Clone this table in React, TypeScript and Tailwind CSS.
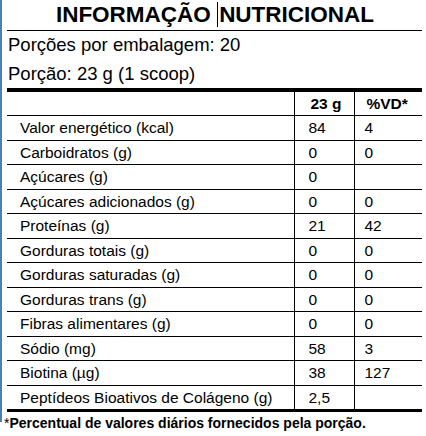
import React from "react";

const ROWS: [string, string, string][] = [
  ["Valor energético (kcal)", "84", "4"],
  ["Carboidratos (g)", "0", "0"],
  ["Açúcares (g)", "0", ""],
  ["Açúcares adicionados (g)", "0", "0"],
  ["Proteínas (g)", "21", "42"],
  ["Gorduras totais (g)", "0", "0"],
  ["Gorduras saturadas (g)", "0", "0"],
  ["Gorduras trans (g)", "0", "0"],
  ["Fibras alimentares (g)", "0", "0"],
  ["Sódio (mg)", "58", "3"],
  ["Biotina (µg)", "38", "127"],
  ["Peptídeos Bioativos de Colágeno (g)", "2,5", ""],
];

export default function App() {
  return (
    <div className="w-[426px] h-[436px] bg-white text-black" style={{ fontFamily: "'Liberation Sans', Arial, sans-serif" }}>
      <div className="h-[422px] border-l-2 border-[#4f7fae] pl-[5px] pr-[4px]">
        <div className="relative h-[31px] border-b border-black flex justify-center">
          <h1 className="text-[22.5px] font-bold leading-none pt-[4px] pl-[1px]">
            INFORMAÇÃO <span className="border-l border-black pl-[1px]">NUTRICIONAL</span>
          </h1>
        </div>
        <p className="text-[18.5px] leading-[29px] pl-[1px] -mt-[1px]">Porções por embalagem: 20</p>
        <p className="text-[18.5px] leading-[29px] pl-[1px]">Porção: 23 g (1 scoop)</p>
        <table className="w-full border-collapse text-[15.5px] border-t-[4px] border-black">
          <thead>
            <tr className="h-[23px] border-b border-black">
              <th className="w-[287px]"></th>
              <th className="w-[60px] border-l border-black text-left font-bold pl-[16px]">23 g</th>
              <th className="border-l border-black text-left font-bold pl-[12px]">%VD*</th>
            </tr>
          </thead>
          <tbody>
            {ROWS.map(([name, v, vd]) => (
              <tr key={name} className="h-[24.5px] border-b border-black">
                <td className="pl-[13px] leading-none">{name}</td>
                <td className="border-l border-black pl-[14px] leading-none">{v}</td>
                <td className="border-l border-black pl-[10px] leading-none">{vd}</td>
              </tr>
            ))}
          </tbody>
        </table>
        <div className="border-t-[3px] border-black -mt-[1px]"></div>
        <p className="text-[14px] font-bold leading-[18px] -ml-[3px] mt-[2px]">
          <span className="font-normal">*</span>Percentual de valores diários fornecidos pela porção.
        </p>
      </div>
    </div>
  );
}
